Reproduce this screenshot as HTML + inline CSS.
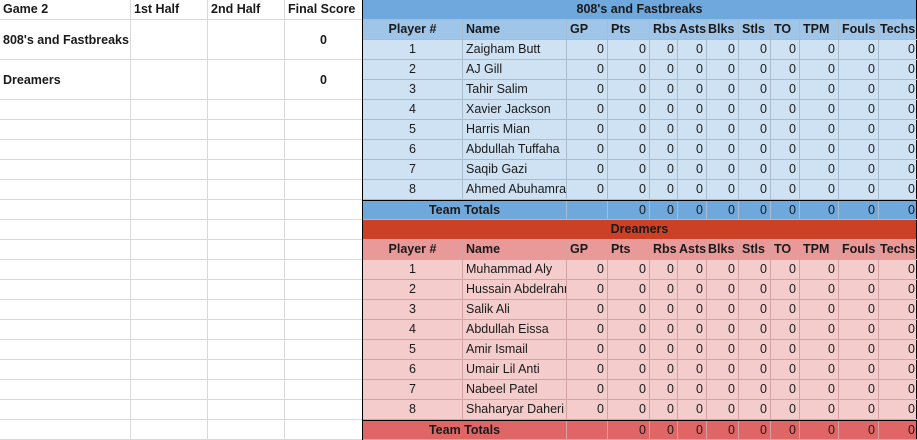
<!DOCTYPE html>
<html><head><meta charset="utf-8"><style>
*{box-sizing:border-box;margin:0;padding:0}
body{width:917px;height:439px;overflow:hidden;background:#fff;font-family:"Liberation Sans",Arial,sans-serif;font-size:12.5px;color:#1a1a1a;position:relative}
.r{display:flex;height:20px}
.c{border-right:1px solid #d9d9d9;border-bottom:1px solid #d9d9d9;line-height:19px;white-space:nowrap;overflow:hidden;padding:0 3px;flex:none}
#L{position:absolute;left:0;top:0;width:362px}
#L .c:nth-child(1){width:131px}#L .c:nth-child(2),#L .c:nth-child(3),#L .c:nth-child(4){width:77px}
#L .c:nth-child(4){border-right:none}
.b{font-weight:bold}
.t{height:40px}.t .c{line-height:41px}
#R{position:absolute;left:362px;top:0;width:555px;border-left:1px solid #000;border-right:1px solid #000}
#R .c{border-color:#a8bccf;text-align:right}
#R .c:nth-child(1){width:100px;text-align:center}
#R .c:nth-child(2){width:104px;text-align:left}
#R .h .c{font-weight:bold}
#R .h .c:nth-child(n+3){text-align:left}
.ti{font-weight:bold;text-align:center;line-height:19px;height:20px;border-bottom:1px solid #a8bccf}
.bt{background:#6fa8dc}.bh{background:#9fc5e8}.br{background:#cfe2f3}
.rt{background:#cc4125}.rh{background:#ea9999}.rr{background:#f4cccc}.rtot{background:#e06666}
#R .red .c{border-color:#d3a3a3}
.tot{border-top:1px solid #000;height:20px}
.tot .c{line-height:18px}
#R .tot .c:first-child{width:204px;text-align:center;font-weight:bold}
</style></head><body>
<div id="L">
<div class="r b"><div class="c">Game 2</div><div class="c">1st Half</div><div class="c">2nd Half</div><div class="c">Final Score</div></div>
<div class="r t b"><div class="c">808's and Fastbreaks</div><div class="c"></div><div class="c"></div><div class="c" style="text-align:center">0</div></div>
<div class="r t b"><div class="c">Dreamers</div><div class="c"></div><div class="c"></div><div class="c" style="text-align:center">0</div></div>
<div id="lp"></div>
</div>
<div id="R">
<div class="ti bt">808's and Fastbreaks</div>
<div id="bp"></div>
</div>
<script>
var e='';for(var k=0;k<17;k++)e+='<div class="r"><div class="c"></div><div class="c"></div><div class="c"></div><div class="c"></div></div>';
document.getElementById('lp').outerHTML=e;
var W=[41,42,28,29,32,32,29,39,40,39];
function cells(gp){var s='';W.forEach(function(w,i){s+='<div class="c" style="width:'+w+'px'+(i==9?';border-right:none':'')+'">'+(i==0&&!gp?'':'0')+'</div>';});return s;}
function rows(names,cls){var s='';names.forEach(function(n,i){s+='<div class="r '+cls+'"><div class="c">'+(i+1)+'</div><div class="c">'+n+'</div>'+cells(true)+'</div>';});return s;}
var hdr='<div class="c">Player #</div><div class="c">Name</div>';var hn=['GP','Pts','Rbs','Asts','Blks','Stls','TO','TPM','Fouls','Techs'];
hn.forEach(function(n,i){hdr+='<div class="c" style="width:'+W[i]+'px;padding:0 '+(i==3||i==4||i==9?1:3)+'px'+(i==9?';border-right:none':'')+'">'+n+'</div>';});
var a=['Zaigham Butt','AJ Gill','Tahir Salim','Xavier Jackson','Harris Mian','Abdullah Tuffaha','Saqib Gazi','Ahmed Abuhamra'];
var b=['Muhammad Aly','Hussain Abdelrahman','Salik Ali','Abdullah Eissa','Amir Ismail','Umair Lil Anti','Nabeel Patel','Shaharyar Daheri'];
var s='<div class="r h bh">'+hdr+'</div>'+rows(a,'br');
s+='<div class="r tot bt"><div class="c">Team Totals</div>'+cells(false)+'</div>';
s+='<div class="red"><div class="ti rt" style="border-color:#d3a3a3">Dreamers</div><div class="r h rh">'+hdr+'</div>'+rows(b,'rr')+'<div class="r tot rtot"><div class="c">Team Totals</div>'+cells(false)+'</div></div>';
document.getElementById('bp').outerHTML=s;
</script>
</body></html>
